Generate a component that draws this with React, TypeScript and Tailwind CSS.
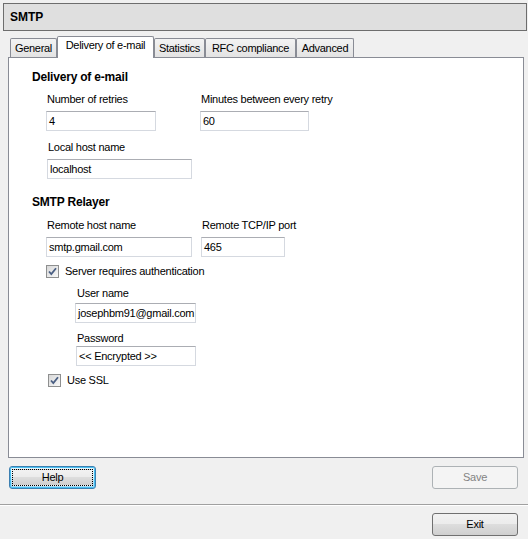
import React from "react";

const Label = ({ children, className = "" }: { children: React.ReactNode; className?: string }) => (
  <div className={`h-[14px] leading-[14px] text-[11px] tracking-[-0.25px] text-black whitespace-nowrap ${className}`}>{children}</div>
);

const Field = ({ value, className = "" }: { value: string; className?: string }) => (
  <div
    className={`h-[20px] bg-white border border-[#d5d9e0] border-t-[#abadb3] flex items-center pl-[2px] text-[11px] tracking-[-0.25px] text-black whitespace-nowrap ${className}`}
  >
    {value}
  </div>
);

const Check = () => (
  <div className="w-[13px] h-[13px] border border-[#8e8f8f] bg-[linear-gradient(135deg,#d8d8d8,#f8f8f8)] flex items-center justify-center">
    <svg width="11" height="11" viewBox="0 0 11 11">
      <path d="M2 5.5 L4.3 8 L9 2.2" fill="none" stroke="#4a5f83" strokeWidth="1.8" />
    </svg>
  </div>
);

const Tab = ({ label, w, selected }: { label: string; w: string; selected?: boolean }) =>
  selected ? (
    <div
      className={`${w} h-[22px] -mb-[1px] relative z-10 bg-white border border-b-0 border-[#898c95] rounded-t-[2px] text-center leading-[17px] text-[11px] tracking-[-0.3px] whitespace-nowrap`}
    >
      {label}
    </div>
  ) : (
    <div
      className={`${w} h-[19px] bg-[linear-gradient(to_bottom,#f3f3f3,#e3e3e3)] border border-b-0 border-[#898c95] rounded-t-[2px] text-center leading-[19px] text-[11px] tracking-[-0.3px] whitespace-nowrap`}
    >
      {label}
    </div>
  );

export default function App() {
  return (
    <div className="w-[528px] h-[539px] bg-[#f0f0f0] overflow-hidden font-['Liberation_Sans',Arial,sans-serif] text-black flex flex-col">
      {/* Header */}
      <div className="mt-[3px] ml-[3px] w-[524px] h-[28px] shrink-0 border border-[#6d6d6d] bg-[#dfdfdf] flex items-center pl-[6px]">
        <span className="text-[12px] font-bold leading-[14px]">SMTP</span>
      </div>

      {/* Tabs */}
      <div className="mt-[5px] ml-[10px] h-[21px] shrink-0 flex items-end">
        <Tab label="General" w="w-[47px]" />
        <Tab label="Delivery of e-mail" w="w-[97px]" selected />
        <Tab label="Statistics" w="w-[51px]" />
        <Tab label="RFC compliance" w="w-[91px]" />
        <Tab label="Advanced" w="w-[58px]" />
      </div>

      {/* Panel */}
      <div className="ml-[8px] w-[516px] h-[401px] shrink-0 border border-[#898c95] bg-white flex flex-col">
        <div className="mt-[12px] ml-[23px] h-[14px] leading-[14px] text-[12px] font-bold tracking-[-0.2px]">Delivery of e-mail</div>

        <div className="mt-[8px] flex">
          <Label className="ml-[38px] w-[154px]">Number of retries</Label>
          <Label>Minutes between every retry</Label>
        </div>
        <div className="mt-[5px] flex">
          <Field value="4" className="ml-[37px] w-[110px]" />
          <Field value="60" className="ml-[44px] w-[109px]" />
        </div>

        <Label className="mt-[9px] ml-[39px]">Local host name</Label>
        <Field value="localhost" className="mt-[5px] ml-[38px] w-[145px]" />

        <div className="mt-[16px] ml-[23px] h-[14px] leading-[14px] text-[12px] font-bold tracking-[-0.2px]">SMTP Relayer</div>

        <div className="mt-[9px] flex">
          <Label className="ml-[38px] w-[155px]">Remote host name</Label>
          <Label>Remote TCP/IP port</Label>
        </div>
        <div className="mt-[5px] flex">
          <Field value="smtp.gmail.com" className="ml-[37px] w-[146px]" />
          <Field value="465" className="ml-[9px] w-[84px]" />
        </div>

        <div className="mt-[7px] ml-[37px] flex items-center h-[14px]">
          <Check />
          <Label className="ml-[6px]">Server requires authentication</Label>
        </div>

        <Label className="mt-[8px] ml-[68px]">User name</Label>
        <Field value="josephbm91@gmail.com" className="mt-[3px] ml-[66px] w-[121px]" />

        <Label className="mt-[8px] ml-[68px]">Password</Label>
        <Field value="<< Encrypted >>" className="mt-[1px] ml-[67px] w-[120px]" />

        <div className="mt-[7px] ml-[39px] flex items-center h-[14px]">
          <Check />
          <Label className="ml-[6px]">Use SSL</Label>
        </div>
      </div>

      {/* Help / Save */}
      <div className="mt-[8px] flex shrink-0">
        <div className="ml-[9px] w-[87px] h-[23px] rounded-[3px] border border-[#3c7fb1] shadow-[inset_0_0_0_1px_#48c0f0] bg-[linear-gradient(to_bottom,#eaf6fd_0%,#d9f0fc_50%,#bee6fd_50%,#a7d9f5_100%)] p-[2px]">
          <div className="w-full h-full border border-dotted border-black bg-[linear-gradient(to_bottom,#f2f2f2_0%,#ebebeb_50%,#dddddd_50%,#cfcfcf_100%)] flex items-center justify-center text-[11px] tracking-[-0.25px]">
            Help
          </div>
        </div>
        <div className="ml-[336px] w-[86px] h-[23px] rounded-[3px] border border-[#adb2b5] bg-[#f4f4f4] flex items-center justify-center text-[11px] tracking-[-0.25px] text-[#838383]">
          Save
        </div>
      </div>

      {/* Separator */}
      <div className="mt-[15px] h-[1px] bg-[#a0a0a0] shrink-0" />
      <div className="h-[1px] bg-white shrink-0" />

      {/* Exit */}
      <div className="mt-[7px] flex shrink-0">
        <div className="ml-[432px] w-[86px] h-[23px] rounded-[3px] border border-[#707070] bg-[linear-gradient(to_bottom,#f2f2f2_0%,#ebebeb_50%,#dddddd_50%,#cfcfcf_100%)] flex items-center justify-center text-[11px] tracking-[-0.25px]">
          Exit
        </div>
      </div>
    </div>
  );
}
